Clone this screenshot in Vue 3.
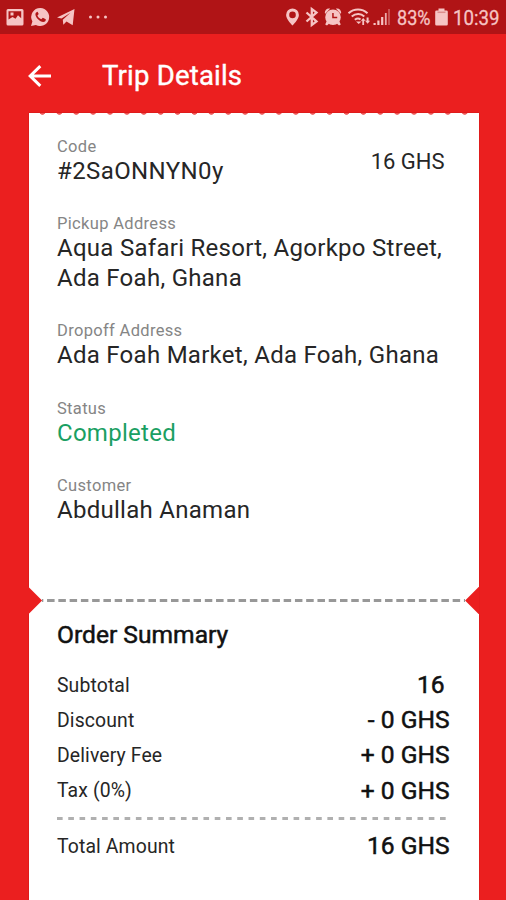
<script setup>
const fields = [
  { label: 'Pickup Address', value: 'Aqua Safari Resort, Agorkpo Street, Ada Foah, Ghana' },
  { label: 'Dropoff Address', value: 'Ada Foah Market, Ada Foah, Ghana' },
  { label: 'Status', value: 'Completed', done: true },
  { label: 'Customer', value: 'Abdullah Anaman' },
]
const rows = [
  { label: 'Subtotal', value: '16', inset: true },
  { label: 'Discount', value: '- 0 GHS' },
  { label: 'Delivery Fee', value: '+ 0 GHS' },
  { label: 'Tax (0%)', value: '+ 0 GHS' },
]
</script>

<template>
  <div class="screen">
    <div class="status">
      <svg class="status-icons" viewBox="0 0 506 34" width="506" height="34">
        <g fill="#f6c4c4">
          <path fill-rule="evenodd" d="M8 9h14a1.500 1.500 0 0 1 1.500 1.500v13.500a1.500 1.500 0 0 1-1.500 1.500H8A1.500 1.500 0 0 1 6.500 24V10.500A1.500 1.500 0 0 1 8 9zM8.500 11.300v8.200l4-2.500 3 1.800 2.500-3.500 3.200 3v-7zm2 1.200h3v3h-3z" />
          <path fill-rule="evenodd" d="M40.500 8a9 9 0 1 1-4.600 16.900L31 26l1.400-4.600A9 9 0 0 1 40.500 8zM37 12c-2.500 1-1.800 4.200.8 7 2.800 3 6 4 7.700 1.900l.3-1.700-3-1.500-1.500 1.600c-2-.8-3.200-2-3.900-3.700l1.300-1.500-1.100-2.300z" />
          <path d="M57 17.600 74.500 9 72.700 25.200 66.500 21.400 63.300 24.800 62.800 19.700 70.500 12.800 61.500 18.600z" />
          <circle cx="90.500" cy="17" r="1.500" />
          <circle cx="98" cy="17" r="1.500" />
          <circle cx="105.500" cy="17" r="1.500" />
          <path fill-rule="evenodd" d="M292.500 8.500a6.400 6.400 0 0 1 6.400 6.400c0 4.200-6.400 10.600-6.400 10.600s-6.400-6.400-6.400-10.600a6.400 6.400 0 0 1 6.400-6.400zm0 3.100a3.300 3.300 0 1 0 0 6.600 3.300 3.300 0 0 0 0-6.600z" />
          <path fill-rule="evenodd" d="M333 9.500a7.800 7.800 0 1 1 0 15.600 7.800 7.800 0 0 1 0-15.600zM332.200 13v5.300h5v-1.500h-3.500V13z" />
          <path d="M324.800 13c0-3.500 2.500-5.200 5.400-4.400l-4.800 5.200zM341.200 13c0-3.500-2.500-5.200-5.400-4.400l4.800 5.200zM326.800 21l2.400 2.400-2.200 2.200-1.800-1.200zM339.200 21l-2.400 2.400 2.200 2.200 1.800-1.200z" />
          <path d="M356 21.500 361.500 21.500 358.700 24z" />
          <path d="M362.300 25v-4.200h-1.500l2.400-2.800 2.400 2.800h-1.500V25zM366.600 17.500h2v3.200h1.500l-2.500 3.100-2.500-3.100h1.500z" />
          <path d="M373.500 23h2.200v2h-2.200zM377.300 20.500h2.200V25h-2.200zM381.100 17h2.200v8h-2.200z" />
          <path opacity=".85" d="M384.900 13h1.800v12h-1.800z" />
          <path opacity=".35" d="M388 9h2v16h-2z" />
          <path d="M438.500 8.500h6v2h2a1.300 1.300 0 0 1 1.300 1.300v12.400a1.300 1.300 0 0 1-1.300 1.300h-10a1.300 1.300 0 0 1-1.300-1.300V11.800a1.300 1.300 0 0 1 1.300-1.300h2z" />
        </g>
        <path d="M437.500 12.300h8" stroke="#dc8d8d" stroke-width="1.500" />
        <path d="M306.500 12.500 316.500 21.500 311.800 25V9L316.500 12.500 306.500 21.500" fill="none" stroke="#f6c4c4" stroke-width="2.300" />
        <path d="M348.500 13.300c5.500-5 13.500-5 19 0M351.700 16.600c3.800-3.300 9.200-3.300 12.600-.2M354.800 19.800c2-1.500 4.200-1.500 5.700-.3" fill="none" stroke="#f6c4c4" stroke-width="2" />
        <g class="status-text" fill="#f6c4c4">
          <text x="397" y="25" textLength="33.500" lengthAdjust="spacingAndGlyphs">83%</text>
          <text x="453" y="25" textLength="46.500" lengthAdjust="spacingAndGlyphs">10:39</text>
        </g>
      </svg>
    </div>

    <header class="bar">
      <svg class="back" viewBox="0 0 24 24" width="24" height="24">
        <path d="M12.300 2.200 2.200 12l10.100 9.800M2.500 12H23" fill="none" stroke="#fff" stroke-width="3" />
      </svg>
      <h1>Trip Details</h1>
    </header>

    <main class="ticket">
      <div class="perforation"></div>
      <section class="details">
        <div class="top">
          <div class="field">
            <div class="label">Code</div>
            <div class="value">#2SaONNYN0y</div>
          </div>
          <div class="price">16 GHS</div>
        </div>
        <div v-for="f in fields" :key="f.label" class="field">
          <div class="label">{{ f.label }}</div>
          <div class="value" :class="{ done: f.done }">{{ f.value }}</div>
        </div>
      </section>

      <div class="tear">
        <span class="notch left"></span>
        <span class="dashes"></span>
        <span class="notch right"></span>
      </div>

      <section class="summary">
        <h2>Order Summary</h2>
        <div v-for="r in rows" :key="r.label" class="row">
          <span class="name">{{ r.label }}</span>
          <span class="amount" :class="{ inset: r.inset }">{{ r.value }}</span>
        </div>
        <div class="rule"></div>
        <div class="row">
          <span class="name">Total Amount</span>
          <span class="amount">16 GHS</span>
        </div>
      </section>
    </main>
  </div>
</template>

<style>
body {
  margin: 0;
  background: #eb1f1f;
}
</style>

<style scoped>
.screen {
  display: flex;
  flex-direction: column;
  width: 506px;
  height: 900px;
  overflow: hidden;
  background: #eb1f1f;
  font-family: Roboto, sans-serif;
  color: #262626;
}
.status {
  height: 34px;
  flex: none;
  background: #b01416;
}
.status-icons {
  display: block;
}
.status-text {
  font-size: 21px;
  stroke: #f6c4c4;
  stroke-width: 0.300px;
}
.bar {
  display: flex;
  align-items: center;
  flex: none;
  height: 79px;
  padding: 4px 0 0 28px;
  box-sizing: border-box;
  color: #fff;
}
.back {
  flex: none;
}
h1 {
  margin: 0 0 0 50px;
  font-size: 27.500px;
  font-weight: 400;
  line-height: 32px;
  letter-spacing: 0.200px;
  -webkit-text-stroke: 0.400px #fff;
}
.ticket {
  flex: 1;
  display: flex;
  flex-direction: column;
  width: 450px;
  margin-left: 28.600px;
  background: #fff;
  box-shadow: 0 0 1px #a80d0d;
}
.perforation {
  height: 2px;
  margin: 0 5px;
  background: radial-gradient(ellipse 3px 2px at 50% 0, #ec5656 70%, transparent) 0 0 / 16.900px 2px;
}
.details {
  height: 472px;
  padding: 21.600px 28px 0 28.400px;
  box-sizing: border-box;
  flex: none;
}
.top {
  display: flex;
  justify-content: space-between;
}
.field {
  margin-bottom: 28px;
}
.label {
  font-size: 16.500px;
  line-height: 20px;
  letter-spacing: 0.330px;
  color: #858585;
}
.value {
  font-size: 24px;
  line-height: 29.500px;
  letter-spacing: 0.280px;
}
.top .value {
  letter-spacing: 0.400px;
}
.done {
  color: #1a9f63;
}
.price {
  padding-top: 10px;
  padding-right: 6px;
  font-size: 22px;
  line-height: 30px;
}
.tear {
  display: flex;
  align-items: center;
  flex: none;
  height: 27px;
}
.notch {
  flex: none;
  width: 14.500px;
  height: 27px;
  background: #eb1f1f;
}
.left {
  margin-left: -1px;
  clip-path: polygon(0 0, 1px 0, 100% 50%, 1px 100%, 0 100%);
}
.right {
  margin-right: -1px;
  clip-path: polygon(100% 0, 13.500px 0, 0 50%, 13.500px 100%, 100% 100%);
}
.dashes {
  flex: 1;
  height: 2.500px;
  background: linear-gradient(90deg, #989898 7.800px, transparent 7.800px) -6.200px 0 / 11.270px 100%;
}
.summary {
  padding: 5px 29px 0 28.400px;
}
h2 {
  margin: 0 0 16px;
  font-size: 24.600px;
  font-weight: 400;
  line-height: 32px;
  color: #111;
  -webkit-text-stroke: 0.500px #111;
}
.row {
  display: flex;
  align-items: center;
  justify-content: space-between;
  height: 35.200px;
}
.name {
  padding-top: 1px;
  font-size: 19.400px;
  letter-spacing: 0.120px;
}
.amount {
  font-size: 24.600px;
  line-height: 29px;
  color: #111;
  -webkit-text-stroke: 0.500px #111;
}
.inset {
  padding-right: 5px;
}
.rule {
  height: 3px;
  margin: 9.500px 4px 8px 0;
  background: linear-gradient(90deg, #b0b0b0 5.700px, transparent 5.700px) 0 0 / 11.270px 100%;
}
</style>
